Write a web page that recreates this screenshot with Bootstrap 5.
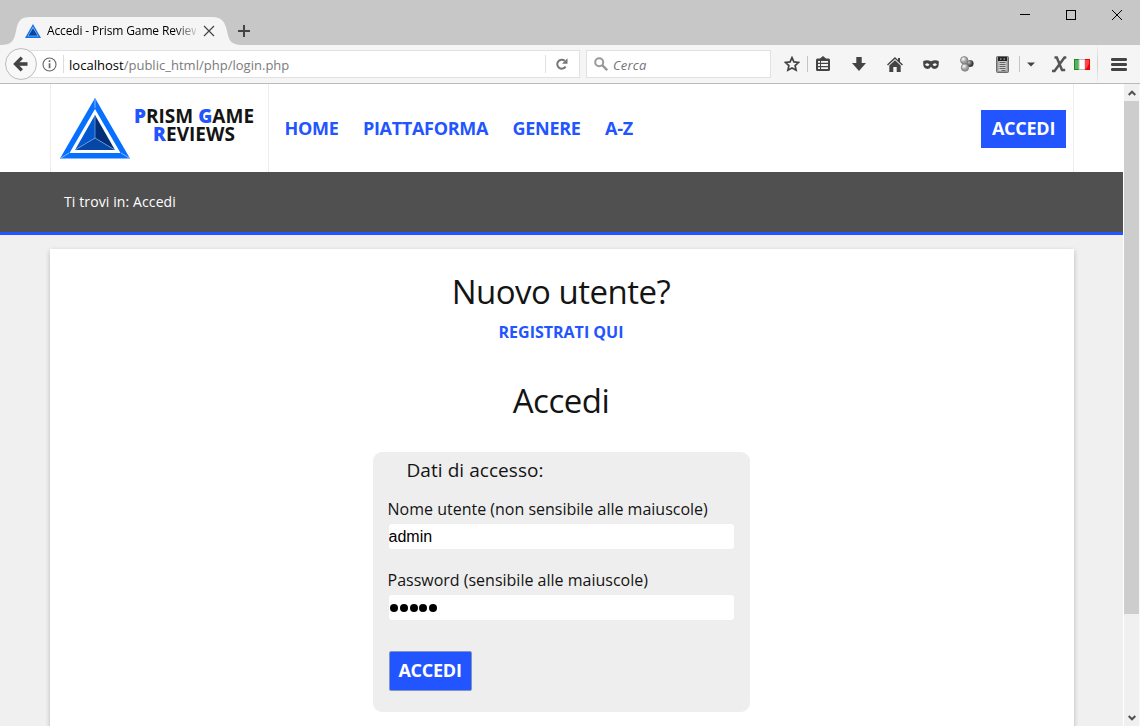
<!DOCTYPE html>
<html lang="it">
<head>
<meta charset="utf-8">
<title>Accedi - Prism Game Reviews</title>
<link href="https://cdn.jsdelivr.net/npm/bootstrap@5.3.0/dist/css/bootstrap.min.css" rel="stylesheet">
<style>
:root{--blue:#2255ff}
body{font-family:"Open Sans","Noto Sans",sans-serif;height:726px;overflow:hidden;color:#141414;line-height:1.2}
svg{display:block;flex:none}
.titlebar{height:45px;background:#c7c7c7}
.tab-shape{left:0;top:17px}
.tab-label{left:47px;top:23px;width:149px;font-size:12px;letter-spacing:-.14px;line-height:16px;color:#000;-webkit-mask-image:linear-gradient(90deg,#000 85%,transparent 103%);mask-image:linear-gradient(90deg,#000 85%,transparent 103%)}
.toolbar{height:39px;background:#f5f5f5;border-bottom:1px solid #bbb}
.back{width:32px;height:32px;border:1px solid #bcbcbc;border-radius:50%;background:#f8f8f8;margin-left:5px;margin-bottom:1px;z-index:2}
.url{width:560px;height:28px;border:1px solid #e1e1e1;background:#fff;margin-left:-17px;font-size:13px;color:#7b7b7b}
.find{width:185px;height:28px;border:1px solid #e1e1e1;background:#fff;margin-left:6px;font-size:13px;color:#757575}
.sep{width:1px;height:16px;background:#c4c4c4;flex:none}
.slot{display:flex;align-items:center;justify-content:center;flex:none;height:24px}
.view{height:642px}
.site-head{height:88px;background:#fff}
.inner{width:1024px;margin-left:50px;border-left:1px solid #ededed;border-right:1px solid #ededed}
.brand-box{width:218px;border-right:1px solid #ededed}
.brand-name{font-size:19px;font-weight:700;line-height:18px;letter-spacing:.02px;width:130px;margin-left:-1px;margin-top:23px}
.brand-name b,.menu a,.reg{color:var(--blue)}
.menu{font-size:18px;font-weight:700;line-height:24px;gap:24.500px;margin-left:15.500px;letter-spacing:-.3px}
.menu a,.reg{text-decoration:none}
.accent-btn{background:var(--blue);color:#fff;font-weight:700;font-size:18px;letter-spacing:-.25px;border:0;padding:0;text-align:center}
.crumb{height:63px;background:#505050;border-bottom:3px solid var(--blue);color:#fff;font-size:14px;letter-spacing:.11px;padding-left:64px}
.ground{background:#f0f0f0;padding:14px 0 0 50px;height:491px}
.sheet{width:1024px;height:520px;background:#fff;box-shadow:0 2px 5px rgba(0,0,0,.24);padding:23px 2px 0 0}
.sheet h1{font-size:33px;font-weight:400;line-height:40px;letter-spacing:-.5px;margin:0}
.reg{font-size:16px;font-weight:700;line-height:20px;margin-top:10px}
.login-box{width:377px;height:260px;background:#eee;border-radius:9px;padding:0 15px;margin-top:31px}
.login-box h2{font-size:19px;font-weight:400;line-height:24px;letter-spacing:.06px;margin:6px 0 0 19px}
.login-box label{font-size:16px;line-height:22px;display:block;white-space:nowrap}
.entry{display:block;width:345px;height:25px;border:0;border-radius:3px;background:#fff;margin-left:1px;padding:0;font:16px "Liberation Sans",sans-serif;color:#000}
.dots{gap:1.8px;padding-left:1.5px}
.dots i{width:8px;height:8px;border-radius:50%;background:#000}
.scroll{width:17px;background:#f0f0f0;border-left:1px solid #fff;border-right:1px solid #f8f8f8}
.thumb{height:513px;background:#cdcdcd}
</style>
</head>
<body>
<div class="titlebar position-relative">
 <svg class="tab-shape position-absolute" width="245" height="28" viewBox="0 0 245 28"><path d="M0 28C12 28 14 24 16 14S20 0 31 0H212C222 0 225 5 227 14S230 28 243 28Z" fill="#f5f5f5"/></svg>
 <svg class="position-absolute" style="left:25px;top:24px" width="16" height="14" viewBox="0 0 70 61"><path d="M35 0 70 61H0Z" fill="#1673ef"/><path d="M35 12 58 53H12Z" fill="#b9d5ff"/><path d="M35 17 55 51H15Z" fill="#07489c"/></svg>
 <div class="tab-label position-absolute text-nowrap">Accedi - Prism Game Review</div>
 <svg class="position-absolute" style="left:203px;top:25px" width="12" height="12"><path d="m1 1 10 10M11 1 1 11" stroke="#444" stroke-width="1.2"/></svg>
 <svg class="position-absolute" style="left:238px;top:25px" width="12" height="12"><path d="M6 0v12M0 6h12" stroke="#444" stroke-width="2"/></svg>
 <svg class="position-absolute" style="left:1019px;top:9px" width="106" height="12" fill="none" stroke="#000" shape-rendering="crispEdges"><path d="M1 5.500h10M47.500 1.500h9v9h-9z"/><path d="m93 1 10 10m0-10-10 10" stroke-width="1" shape-rendering="auto"/></svg>
</div>
<div class="toolbar d-flex align-items-center">
 <div class="back d-flex align-items-center justify-content-center position-relative"><svg width="16" height="16" viewBox="0 0 16 16" fill="none" stroke="#444"><path d="M14.500 8H4" stroke-width="3.600"/><path d="M8.800 1.700 2.500 8l6.300 6.300" stroke-width="3.300"/></svg></div>
 <div class="url d-flex align-items-center">
  <svg style="margin-left:21px" width="15" height="15" viewBox="0 0 15 15"><circle cx="7.500" cy="7.500" r="6.500" fill="none" stroke="#666" stroke-width="1.100"/><path d="M6.700 3.300h1.700V5H6.700zM6.700 6.300h1.700v5H6.700z" fill="#666"/></svg>
  <span class="sep" style="margin-left:6px;background:#ddd;height:18px"></span>
  <span style="margin-left:5px;padding-top:3px;letter-spacing:.02px"><span style="color:#000">localhost</span>/public_html/php/login.php</span>
  <span class="sep ms-auto" style="background:#e1e1e1;height:18px"></span>
  <span class="slot" style="width:31px;margin-right:2px"><svg width="12" height="12" viewBox="0 0 12 12"><path d="M9.600 8.600A4.500 4.500 0 1 1 8.800 2.800" fill="none" stroke="#777" stroke-width="2"/><path d="M11.500.2v5.600H6z" fill="#777"/></svg></span>
 </div>
 <div class="find d-flex align-items-center">
  <svg style="margin-left:7px" width="14" height="14" viewBox="0 0 14 14" fill="none" stroke="#999"><circle cx="5.200" cy="5.200" r="4" stroke-width="2"/><path d="m8.200 8.200 5 5" stroke-width="2.400"/></svg>
  <span class="fst-italic" style="margin-left:5px;padding-top:3px;letter-spacing:.2px">Cerca</span>
 </div>
 <span class="slot" style="width:30px;margin-left:6px"><svg width="16" height="16" viewBox="0 0 16 16"><path d="m8 1.600 1.900 4.300 4.700.5-3.500 3.200 1 4.600L8 11.900l-4.100 2.300 1-4.600-3.500-3.200 4.700-.5z" fill="none" stroke="#444" stroke-width="1.700"/></svg></span>
 <span class="sep"></span>
 <span class="slot" style="width:30px"><svg width="14" height="16" viewBox="0 0 14 16"><path d="M4 2.500 7 0l3 2.500h2.500Q14 2.500 14 4v9.500q0 1.500-1.500 1.500h-11Q0 15 0 13.500V4q0-1.500 1.500-1.500z" fill="#444"/><path d="M2 5h2v1.800H2zM5 5h7v1.800H5zM2 8.100h2v1.800H2zM5 8.100h7v1.800H5zM2 11.200h2V13H2zM5 11.200h7V13H5z" fill="#f5f5f5"/></svg></span>
 <span class="slot" style="width:36px;margin-left:3px"><svg width="14" height="14" viewBox="0 0 14 14"><path d="M4.300 0h5.400v6H14l-7 8-7-8h4.300z" fill="#444"/></svg></span>
 <span class="slot" style="width:36px"><svg width="16" height="15" viewBox="0 0 16 15" fill="#444"><path d="M8 0 0 7.500l1 1 7-6.500 7 6.500 1-1-3-2.800V1h-2v2z"/><path d="M8 3.200 2.300 8.500V15h4v-5h3.400v5h4V8.500z"/></svg></span>
 <span class="slot" style="width:36px"><svg width="16" height="9" viewBox="0 0 16 9"><path d="M.3 1Q4-.8 8 1.300 12-.8 15.700 1 16.500 9 11.500 9 9.500 9 8 6.800 6.500 9 4.500 9-.5 9 .3 1Z" fill="#444"/><path d="M2 4.500Q4.400 1.800 6.500 4.700 4.200 7.400 2 4.500M9.500 4.700Q11.600 1.800 14 4.500 11.800 7.400 9.500 4.700" fill="#f5f5f5"/></svg></span>
 <span class="slot" style="width:36px"><svg width="14" height="16" viewBox="0 0 14 16"><defs><radialGradient id="ball" cx=".35" cy=".3"><stop stop-color="#fff"/><stop offset="1" stop-color="#999"/></radialGradient><radialGradient id="dark" cx=".35" cy=".35"><stop stop-color="#bbb"/><stop offset="1" stop-color="#3b3b3b"/></radialGradient></defs><circle cx="10" cy="7.500" r="3.600" fill="url(#dark)"/><g fill="url(#ball)" stroke="#777" stroke-width=".8"><circle cx="4.200" cy="4.300" r="3.700"/><circle cx="5" cy="11.500" r="3.700"/></g></svg></span>
 <span class="slot" style="width:34px"><svg style="margin-left:1px" width="13" height="17" viewBox="0 0 13 17"><rect x=".5" y=".5" width="12" height="16" rx="1" fill="#999" stroke="#6b6b6b"/><path d="M2 1h9v4H2z" fill="#222"/><path d="M4 2.500h1.500v1H4zM7.500 2.500H9v1H7.500z" fill="#ccc"/><path d="M2.500 5h8v10h-8z" fill="#ccc"/><path d="M3.500 6.500h6m-6 2h6m-6 2h6m-6 2h6m-4 2h4" stroke="#666"/></svg></span>
 <span class="sep"></span>
 <span class="slot" style="width:22px"><svg width="8" height="5"><path d="M0 .5h8L4 4.500z" fill="#444"/></svg></span>
 <span class="slot" style="width:28px;margin-left:3px;margin-right:1px"><svg width="15" height="17" viewBox="0 0 15 17"><path d="M2.500 1.500h2.300l5.200 12.500h3.200M14.300 1.500h-1.800L2.500 15H0" fill="none" stroke="#555" stroke-width="2.500"/></svg></span>
 <svg width="16" height="11" viewBox="0 0 16 11"><path d="M0 0h5v11H0z" fill="#198a20"/><path d="M1 1h4v9H1z" fill="#55b45b"/><path d="M5 .5h6v10H5z" fill="#fff" stroke="#bbb"/><path d="M11 0h5v11h-5z" fill="#f00000"/><path d="M11 1h4v4l-3 5h-1z" fill="#ff4747"/></svg>
 <span class="sep" style="height:38px;margin-left:7px;background:linear-gradient(#f0f0f0,#cfcfcf,#f0f0f0)"></span>
 <span class="slot" style="width:42px"><svg width="16" height="13" viewBox="0 0 16 13"><path d="M1.300 1.500h13.400M1.300 6.500h13.400M1.300 11.500h13.400" stroke="#444" stroke-width="2.800" stroke-linecap="round"/></svg></span>
</div>
<div class="view d-flex">
 <main class="flex-grow-1 overflow-hidden">
  <header class="site-head">
   <div class="inner h-100 d-flex">
    <div class="brand-box d-flex">
     <svg style="margin:14px 0 0 9px" width="70" height="61" viewBox="0 0 70 61">
      <path d="M35 0 70 60.500H0ZM35 11 9.500 55h51Z" fill="#0870ff" fill-rule="evenodd"/>
      <path d="M35 0v10M0 60.500 9 55M70 60.500 61 55" stroke="#80b5ff" fill="none"/>
      <path d="M35 17v23L15 52Z" fill="#0458ce"/><path d="M35 17v23l20 12Z" fill="#032f78"/><path d="M35 40 15 52h40Z" fill="#0646a5"/>
      <path d="M35 17v23L15 52m20-12 20 12" stroke="#6f9ddd" stroke-width=".8" fill="none"/>
     </svg>
     <div class="brand-name text-center text-nowrap"><b>P</b>RISM <b>G</b>AME<br><b>R</b>EVIEWS</div>
    </div>
    <nav class="menu d-flex align-items-center"><a href="#">HOME</a><a href="#">PIATTAFORMA</a><a href="#">GENERE</a><a href="#">A-Z</a></nav>
    <button class="accent-btn ms-auto" style="width:85px;height:38px;margin-top:26px;margin-right:7px">ACCEDI</button>
   </div>
  </header>
  <div class="crumb d-flex align-items-center">Ti trovi in: Accedi</div>
  <div class="ground">
   <section class="sheet d-flex flex-column align-items-center">
    <h1>Nuovo utente?</h1>
    <a class="reg" href="#">REGISTRATI QUI</a>
    <h1 style="margin-top:39px">Accedi</h1>
    <form class="login-box">
     <h2>Dati di accesso:</h2>
     <label style="margin-top:16px" for="user">Nome utente (non sensibile alle maiuscole)</label>
     <input class="entry" style="margin-top:4px" id="user" value="admin">
     <label style="margin-top:20px">Password (sensibile alle maiuscole)</label>
     <div class="entry dots d-flex align-items-center" style="margin-top:4px"><i></i><i></i><i></i><i></i><i></i></div>
     <button type="button" class="accent-btn" style="width:83px;height:40px;margin:31px 0 0 1px;border:1px solid #8296bd;border-radius:2px">ACCEDI</button>
    </form>
   </section>
  </div>
 </main>
 <div class="scroll d-flex flex-column flex-shrink-0">
  <span class="slot" style="height:17px"><svg width="8" height="6"><path d="m.7 5 3.300-3.300L7.300 5" fill="none" stroke="#505050" stroke-width="2"/></svg></span>
  <div class="thumb"></div>
  <span class="slot mt-auto" style="height:17px"><svg width="8" height="6"><path d="m.7 1 3.300 3.300L7.300 1" fill="none" stroke="#505050" stroke-width="2"/></svg></span>
 </div>
</div>
<script src="https://cdn.jsdelivr.net/npm/bootstrap@5.3.0/dist/js/bootstrap.bundle.min.js"></script>
</body>
</html>
